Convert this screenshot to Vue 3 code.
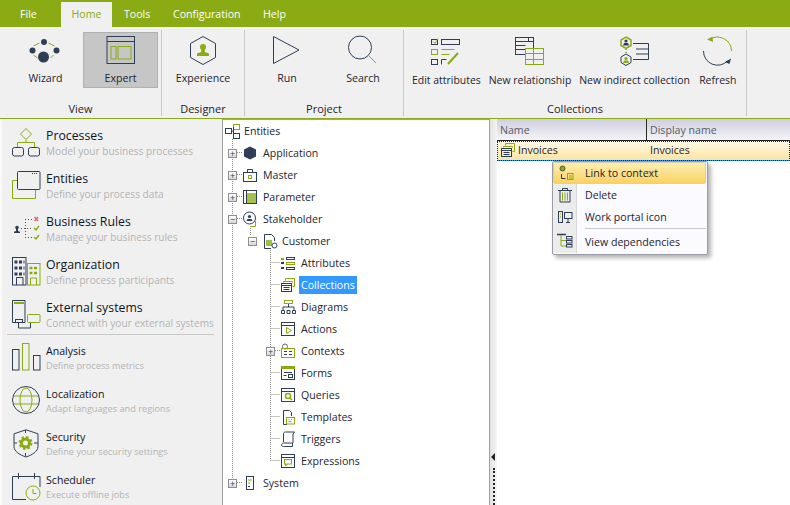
<template>
  <div class="app">
    <!-- Menu superior -->
    <nav class="menu">
      <span v-for="tab in tabs" :key="tab" class="tab" :class="{ active: tab === 'Home' }">{{ tab }}</span>
    </nav>

    <!-- Ribbon -->
    <header class="ribbon">
      <section v-for="group in ribbon" :key="group.name" class="group" :class="group.cls">
        <div class="group-btns">
          <div v-for="btn in group.buttons" :key="btn.label" class="rbtn" :class="[btn.cls, { selected: btn.selected }]">
            <svg class="ricon" viewBox="0 0 40 34" v-html="ribbonIcons[btn.icon]"></svg>
            <span>{{ btn.label }}</span>
          </div>
        </div>
        <div class="group-name">{{ group.name }}</div>
      </section>
    </header>

    <main class="body">
      <!-- Barra lateral -->
      <aside class="side">
        <div v-for="item in sideMain" :key="item.title" class="side-item">
          <svg class="sicon" viewBox="0 0 30 30" v-html="sideIcons[item.icon]"></svg>
          <div class="side-text">
            <div class="stitle">{{ item.title }}</div>
            <div class="ssub">{{ item.sub }}</div>
          </div>
        </div>
        <div class="side-div"></div>
        <div v-for="item in sideSmall" :key="item.title" class="side-item small">
          <svg class="sicon" viewBox="0 0 30 30" v-html="sideIcons[item.icon]"></svg>
          <div class="side-text">
            <div class="stitle">{{ item.title }}</div>
            <div class="ssub">{{ item.sub }}</div>
          </div>
        </div>
      </aside>

      <!-- Arbol -->
      <section class="tree">
        <svg class="tree-lines" width="266" height="385">
          <g fill="none" stroke="#8f8f8f" stroke-dasharray="1 1">
            <path d="M9.5 19V362.5M14 32.5H19M14 54.5H19M14 76.5H19M14 98.5H19M14 362.5H19" />
            <path d="M27.5 106V116" />
            <path d="M47.5 128V340.5" />
            <path d="M47.5 142.5H57M47.5 164.5H57M47.5 186.5H57M47.5 208.5H57M52 230.5H57M47.5 252.5H57M47.5 274.5H57M47.5 296.5H57M47.5 318.5H57M47.5 340.5H57" />
          </g>
        </svg>
        <div v-for="row in treeRows" :key="row.label" class="row" :class="'lvl' + row.level">
          <span class="exp" :class="{ none: !row.exp }">{{ row.exp }}</span>
          <svg class="ticon" viewBox="0 0 16 16" v-html="treeIcons[row.icon]"></svg>
          <span class="tlabel" :class="{ sel: row.sel }">{{ row.label }}</span>
        </div>
      </section>

      <!-- Separador -->
      <div class="splitter"><i></i><b></b></div>

      <!-- Rejilla -->
      <section class="grid">
        <div class="grid-head">
          <div class="col1">Name</div>
          <div class="col2">Display name</div>
        </div>
        <div class="grid-row">
          <div class="col1">
            <svg class="ticon" viewBox="0 0 16 16" v-html="treeIcons.collections"></svg>
            <span>Invoices</span>
          </div>
          <div class="col2">Invoices</div>
        </div>

        <!-- Menu contextual -->
        <div class="ctx">
          <div v-for="opt in ctxMenu" :key="opt.label" class="ctx-item" :class="{ hot: opt.hot }">
            <span class="ctx-ic">
              <svg viewBox="0 0 16 16" v-html="ctxIcons[opt.icon]"></svg>
            </span>
            <span class="ctx-label" :class="{ top: opt.sep }">{{ opt.label }}</span>
          </div>
        </div>
      </section>
    </main>
  </div>
</template>

<script setup>
const tabs = ['File', 'Home', 'Tools', 'Configuration', 'Help']

const ribbon = [
  {
    name: 'View', cls: 'g-view',
    buttons: [
      { label: 'Wizard', icon: 'wizard', cls: 'b-wizard' },
      { label: 'Expert', icon: 'expert', cls: 'b-expert', selected: true }
    ]
  },
  { name: 'Designer', cls: 'g-designer', buttons: [{ label: 'Experience', icon: 'experience', cls: 'b-exp' }] },
  {
    name: 'Project', cls: 'g-project',
    buttons: [
      { label: 'Run', icon: 'run', cls: 'b-run' },
      { label: 'Search', icon: 'search', cls: 'b-search' }
    ]
  },
  {
    name: 'Collections', cls: 'g-coll',
    buttons: [
      { label: 'Edit attributes', icon: 'edit', cls: 'low' },
      { label: 'New relationship', icon: 'relation', cls: 'low' },
      { label: 'New indirect collection', icon: 'indirect', cls: 'low' },
      { label: 'Refresh', icon: 'refresh', cls: 'low' }
    ]
  }
]

const sideMain = [
  { title: 'Processes', sub: 'Model your business processes', icon: 'processes' },
  { title: 'Entities', sub: 'Define your process data', icon: 'entities' },
  { title: 'Business Rules', sub: 'Manage your business rules', icon: 'rules' },
  { title: 'Organization', sub: 'Define process participants', icon: 'org' },
  { title: 'External systems', sub: 'Connect with your external systems', icon: 'external' }
]

const sideSmall = [
  { title: 'Analysis', sub: 'Define process metrics', icon: 'analysis' },
  { title: 'Localization', sub: 'Adapt languages and regions', icon: 'local' },
  { title: 'Security', sub: 'Define your security settings', icon: 'security' },
  { title: 'Scheduler', sub: 'Execute offline jobs', icon: 'scheduler' }
]

const treeRows = [
  { label: 'Entities', level: 0, icon: 'entities' },
  { label: 'Application', level: 1, exp: '+', icon: 'application' },
  { label: 'Master', level: 1, exp: '+', icon: 'master' },
  { label: 'Parameter', level: 1, exp: '+', icon: 'parameter' },
  { label: 'Stakeholder', level: 1, exp: '−', icon: 'stakeholder' },
  { label: 'Customer', level: 2, exp: '−', icon: 'customer' },
  { label: 'Attributes', level: 3, icon: 'attributes' },
  { label: 'Collections', level: 3, icon: 'collections', sel: true },
  { label: 'Diagrams', level: 3, icon: 'diagrams' },
  { label: 'Actions', level: 3, icon: 'actions' },
  { label: 'Contexts', level: 3, exp: '+', icon: 'contexts' },
  { label: 'Forms', level: 3, icon: 'forms' },
  { label: 'Queries', level: 3, icon: 'queries' },
  { label: 'Templates', level: 3, icon: 'templates' },
  { label: 'Triggers', level: 3, icon: 'triggers' },
  { label: 'Expressions', level: 3, icon: 'expressions' },
  { label: 'System', level: 1, exp: '+', icon: 'system' }
]

const ctxMenu = [
  { label: 'Link to context', icon: 'link', hot: true },
  { label: 'Delete', icon: 'delete' },
  { label: 'Work portal icon', icon: 'portal' },
  { label: 'View dependencies', icon: 'deps', sep: true }
]

// Colores de los iconos: N azul oscuro, G verde
const N = '#2e3f55'
const G = '#8aab14'
const s = (c, w = 1) => `fill="none" stroke="${c}" stroke-width="${w}"`

const ribbonIcons = {
  wizard: `<circle cx="17.5" cy="23" r="5.5" fill="${N}"/><circle cx="18" cy="8" r="3" fill="${N}"/><circle cx="6.5" cy="16.5" r="3" fill="${N}"/><circle cx="30.5" cy="16.5" r="3" fill="${N}"/><path ${s(G)} d="M7.5 12l6-3M22.5 9l6 3M7.5 21l4 3M27.5 21l-3 3"/>`,
  expert: `<rect x="6" y="2.5" width="27.5" height="27" ${s(N)}/><path ${s(N)} d="M6 7.5h27.5"/><rect x="10" y="12.5" width="5" height="12.5" ${s(G)}/><rect x="17" y="12.5" width="13" height="12.5" ${s(G)}/>`,
  experience: `<path ${s(N)} d="M20 2.5l12.5 7v14l-12.5 7-12.5-7v-14z"/><circle cx="20" cy="13" r="3" fill="${G}"/><path fill="${G}" d="M18.2 15h3.6v3l4.2 1.5V22H14v-2.5l4.2-1.5z"/>`,
  run: `<path ${s(N)} stroke-linejoin="round" d="M6.5 2.5l25.500 13.500-25.500 13.500z"/>`,
  search: `<circle cx="17" cy="13.5" r="11.5" ${s(N)}/><path ${s(G)} d="M25.5 21.5l7.5 7.5"/>`,
  edit: `<rect x="5.5" y="6.5" width="6" height="5" ${s(N)}/><path ${s(G)} d="M7 8.5l2 2 3-5"/><rect x="15.5" y="6.5" width="18" height="5" ${s(N)}/><rect x="5.5" y="16.5" width="6" height="5" ${s(G)}/><path ${s(G)} d="M15.5 16.5h13M15.5 21.5h8"/><rect x="5.5" y="26.5" width="6" height="5" ${s(N)}/><path ${s(N)} d="M15.5 31.5v-5h5"/><path ${s(G, 2)} d="M22 31l10-11"/>`,
  relation: `<rect x="5.5" y="4.5" width="18" height="17" ${s(N)}/><path ${s(N)} d="M5.5 8.5h18M5.5 12.5h10M5.5 16.5h10M18.5 4.5v4"/><rect x="15.5" y="15.5" width="18" height="16" fill="#f0f0f0" stroke="${G}"/><path ${s(G)} d="M15.5 20.5h18M15.5 26.5h18M23.5 15.5v16"/>`,
  indirect: `<path ${s(G, 1.5)} d="M11 4l5 3v5.5l-5 3-5-3V7z"/><path ${s(N)} d="M11 21l5 3v5.5l-5 3-5-3V24z"/><circle cx="11" cy="8" r="1.6" fill="${N}"/><path fill="${N}" d="M8 12.5h6l-1-2.500H9z"/><circle cx="11" cy="25.5" r="1.6" fill="${G}"/><path fill="${G}" d="M8 30h6l-1-2.500H9z"/><path ${s(N)} stroke-dasharray="1 2" d="M11 16v5"/><path ${s(N)} d="M18 10.5h15.500v16H18M21 16h12M21 21h12"/>`,
  refresh: `<path ${s(G)} d="M11 7a14 14 0 0 1 22.500 11"/><path fill="${G}" d="M9 6.500l5.500-3 .5 5.500z"/><path ${s(N)} d="M5.500 18a14 14 0 0 0 24 10"/><path fill="${N}" d="M33 25.500l-1.500 5.500-4.500-2z"/>`
}

// Iconos laterales dibujados 1:1 sobre la caja de 30x30
const sideIcons = {
  processes: `<path ${s(G)} d="M15 1.5l5.5 5.5-5.5 5.5-5.5-5.5zM15 12.5v3M6.5 20v-4.5h17V20"/><rect x="1.5" y="20.5" width="11" height="8.5" rx="2" ${s(N)}/><rect x="17.5" y="20.5" width="11" height="8.5" rx="2" ${s(N)}/>`,
  entities: `<path ${s(G)} d="M6 10.5H1.5v18h23V20"/><rect x="6.5" y="1.5" width="22.5" height="18" rx="1" ${s(N)}/><path stroke="${N}" stroke-dasharray="1 1" d="M21 3.5h6"/>`,
  rules: `<circle cx="6" cy="14.5" r="1.8" fill="${N}"/><path fill="${N}" d="M5 16h2v2l2 .8V20H3v-1.200l2-.8z"/><path fill="none" stroke="#555" stroke-dasharray="1 2" d="M14 6.5h8M10 15.5h12M14 24.5h8M14.5 6v18"/><path stroke="#e06070" stroke-width="1.4" d="M23.5 4l3.5 4m0-4l-3.5 4"/><path ${s(G, 1.4)} d="M23 15l2 2 3-4M23 24l2 2 3-4"/>`,
  org: `<rect x="1.5" y="1.5" width="13.5" height="27.5" ${s(N)}/><path fill="none" stroke="${N}" stroke-width="3" stroke-dasharray="3 1.5" d="M3.5 6h10M3.5 12h10M3.5 18h10"/><path ${s(N)} d="M5.5 29v-7.500h6.500V29"/><rect x="16.5" y="7.5" width="12.5" height="21.5" ${s(G)}/><path fill="none" stroke="${G}" stroke-width="2.5" stroke-dasharray="3 1.5" d="M18.5 12h8M18.5 17h8"/><path ${s(G)} d="M19.5 29v-7h6v7"/>`,
  external: `<path ${s(N)} d="M1.5 23.5V1.5H14v22z"/><path ${s(G, 2)} d="M3 4h10"/><rect x="4.5" y="20.5" width="7" height="3" fill="#f0f0f0" stroke="${N}"/><path ${s(N)} d="M7.5 23.5v5.500H19.500v-5"/><rect x="16.5" y="15.5" width="12.5" height="8" rx="1" fill="#f0f0f0" stroke="${G}"/>`,
  analysis: `<rect x="1.5" y="6.5" width="6.5" height="20.5" ${s(N)}/><rect x="11.5" y="0.5" width="6.5" height="26.5" ${s(G)}/><rect x="22.5" y="12.5" width="6.5" height="14.5" ${s(N)}/>`,
  local: `<circle cx="15" cy="14" r="13.5" ${s(N)}/><ellipse cx="15" cy="14" rx="6" ry="12" ${s(G)}/><path ${s(G)} d="M3 10h24M3 18h24"/>`,
  security: `<path ${s(N)} d="M15 .8l12 4v12.700c0 5-6 8.500-12 10.500-6-2-12-5.500-12-10.500V4.800z"/><path stroke="${N}" d="M14.5 1v3M14.5 24v3M3 14h3M23 14h4"/><circle cx="14.5" cy="14" r="4" fill="none" stroke="${G}" stroke-width="3"/><circle cx="14.5" cy="14" r="6" fill="none" stroke="${G}" stroke-width="2" stroke-dasharray="2.4 2.3"/>`,
  scheduler: `<path ${s(N)} d="M29 15V4.500H1.500v23h13.500M7.500 1v6M23.500 1v6"/><circle cx="22" cy="21" r="7" fill="#f0f0f0" stroke="${G}"/><path ${s(G)} d="M22 17v4.500h3.500"/>`
}

const treeIcons = {
  entities: `<rect x="1.5" y="5.5" width="6" height="5" ${s(N)}/><rect x="9.5" y="1.5" width="6" height="5" ${s(G)}/><rect x="9.5" y="10.5" width="6" height="5" ${s(N)}/><path ${s(N)} d="M7.5 8h2V4M9.5 8v5"/>`,
  application: `<path fill="${N}" d="M8 1.5l6 3v7l-6 3-6-3v-7z"/>`,
  master: `<rect x="1.5" y="5.5" width="13" height="9" ${s(N)}/><path ${s(N)} d="M5.5 5.5v-3h5v3"/><rect x="6.5" y="8.5" width="3" height="3" ${s(G)} fill="#fff"/>`,
  parameter: `<rect x="1.5" y="1.5" width="13" height="13" ${s(N)}/><rect x="5" y="4" width="9" height="10" fill="${G}" opacity=".75"/><path ${s(N)} d="M4.5 2v12"/>`,
  stakeholder: `<path ${s(G)} d="M13.5 10v5.500h-5"/><circle cx="7.5" cy="7" r="6" ${s(N)}/><circle cx="7.5" cy="5.5" r="1.6" fill="${N}"/><path fill="${N}" d="M4.5 10h6l-1-2h-4z"/>`,
  customer: `<path ${s(N)} d="M9 15.5H2.500v-14h7l3 3V8"/><rect x="4" y="7" width="6" height="6" fill="${G}" opacity=".8"/><circle cx="12.5" cy="12.5" r="2.5" ${s(N)}/>`,
  attributes: `<path stroke="${G}" stroke-width="2" d="M1 4h3"/><path stroke="${N}" stroke-width="2" d="M1 8h3M1 13h3"/><rect x="6.5" y="2.5" width="8" height="2" ${s(N)}/><rect x="6.5" y="7.5" width="8" height="2" ${s(G)}/><rect x="6.5" y="12.5" width="8" height="2" ${s(N)}/>`,
  collections: `<path ${s(G)} d="M5.5 3.500v-2h9v8h-2"/><path ${s(G)} d="M3.5 5.500v-1h9v1"/><rect x="1.5" y="6.5" width="10" height="8" ${s(N)} fill="#fff"/><path ${s(N)} d="M1.5 8.500h10M3.500 10.500h6M3.500 12.500h6"/>`,
  diagrams: `<rect x="4.5" y="1.5" width="8" height="3" ${s(G)}/><path ${s(N)} d="M8.5 5v3M3 11V8h11v3"/><path ${s(N)} d="M1.5 11.500h3v3h-3zM7 11.500h3v3H7zM12.500 11.500h3v3h-3z"/>`,
  actions: `<rect x="1.5" y="1.5" width="13" height="13" ${s(N)}/><path ${s(N)} d="M1.5 4.500h13"/><path ${s(G)} d="M6.5 6.500l5 3-5 3z"/>`,
  contexts: `<circle cx="5" cy="3.5" r="2.5" fill="none" stroke="#666"/><rect x="1.5" y="5.5" width="13" height="9" ${s(G)}/><path ${s(N)} d="M4 8.500h3M9 8.500h3M4 11.500h3M9 11.500h3"/>`,
  forms: `<rect x="1.5" y="1.5" width="13" height="13" ${s(N)}/><rect x="1" y="1" width="14" height="3" fill="${G}"/><path ${s(N)} d="M4 7.500h8"/><rect x="8.5" y="9.5" width="4" height="3" ${s(N)}/><path ${s(N)} d="M3.500 10.500h3"/>`,
  queries: `<rect x="1.5" y="1.5" width="13" height="13" ${s(N)}/><path ${s(N)} d="M1.5 4.500h13"/><circle cx="8" cy="9" r="2.5" ${s(G, 1.5)}/><path ${s(G, 1.5)} d="M10 11l2 2"/>`,
  templates: `<path ${s(N)} d="M7 15.500H3.500v-14h6l2 2V7"/><rect x="6.5" y="8.5" width="8" height="6.5" ${s(G)} fill="#fff"/><path ${s(G)} d="M8.500 10.500h1M11 10.500h1M8.500 12.500h3"/>`,
  triggers: `<path ${s(N)} d="M3.500 11V2.500c0-1 1-1.500 2-1.500h9l-1.500 2v9M1.500 14.500c1 1 2 1 3 1h8v-3.500h-9c-1 0-2 1-2 2.500z"/>`,
  expressions: `<rect x="1.5" y="1.5" width="13" height="13" ${s(N)}/><path ${s(N)} d="M1.5 4.500h13"/><rect x="4.5" y="6.5" width="7" height="4.5" ${s(G)}/><path ${s(G)} d="M5.500 11v2l2-2"/>`,
  system: `<rect x="4.5" y="1.5" width="7" height="13" ${s(N)}/><path ${s(G)} d="M6 5h4M6 8h2"/><path ${s(N)} d="M6 11.500h2"/>`
}

const ctxIcons = {
  link: `<circle cx="4.5" cy="3.5" r="2.5" fill="${G}" stroke="#555"/><path ${s(N)} d="M3.500 9v4.500h4"/><rect x="9.5" y="8.5" width="5.5" height="6" ${s(G)}/><path ${s(G)} d="M11 11h3M11 13h3"/>`,
  delete: `<path ${s(N)} d="M1 3.500h14M5.500 3V1.500h5V3M3 3.500v11.500h10V3.500"/><path stroke="${G}" d="M5.500 5.500v8M8 5.500v8M10.500 5.500v8" />`,
  portal: `<rect x="1.5" y="2.5" width="4" height="11" ${s(N)}/><path ${s(G)} d="M3 5h1M3 8h1"/><rect x="7.5" y="3.5" width="7.5" height="6" ${s(N)}/><path ${s(N)} d="M11 10v3M9 13.500h4"/>`,
  deps: `<path ${s(N, 1.5)} d="M0 1.500h9"/><path ${s(G)} d="M4 2v11h5M4 7.500h5"/><rect x="9.5" y="3.5" width="5.5" height="2.5" ${s(N)}/><rect x="9.5" y="7.5" width="5.5" height="2.5" ${s(N)}/><rect x="9.5" y="11.5" width="5.5" height="2.5" ${s(N)}/>`
}
</script>

<style>
html, body {
  margin: 0;
  background: #f0f0f0;
}
</style>

<style scoped>
.app {
  width: 790px;
  height: 505px;
  overflow: hidden;
  display: flex;
  flex-direction: column;
  font-family: "Open Sans", "Liberation Sans", sans-serif;
  font-size: 10.6px;
  color: #1e2430;
  background: #f0f0f0;
}

.menu {
  height: 27px;
  flex: none;
  display: flex;
  align-items: flex-end;
  background: #8aab14;
  color: #fff;
  padding-left: 20px;
}
.tab {
  height: 25px;
  line-height: 24px;
  margin-right: 24px;
  white-space: nowrap;
}
.tab:nth-child(1) { width: 17px; }
.tab:nth-child(3) { width: 25px; }
.tab:nth-child(4) { width: 66px; }
.tab.active {
  background: #f0f0f0;
  color: #8aab14;
  box-sizing: border-box;
  width: 51px;
  text-align: center;
  margin-right: 12px;
}

.ribbon {
  height: 91px;
  flex: none;
  display: flex;
  border-bottom: 1px solid #8aab14;
}
.group {
  box-sizing: border-box;
  height: 86px;
  margin-top: 3px;
  border-right: 1px solid #c8c8c8;
  display: flex;
  flex-direction: column;
}
.g-view { width: 162px; }
.g-designer { width: 83px; }
.g-project { width: 159px; }
.g-coll { width: 343px; }
.group-btns {
  height: 70px;
  display: flex;
  padding-top: 2px;
  box-sizing: border-box;
}
.group-name {
  text-align: center;
  line-height: 14px;
  height: 14px;
  margin-top: 2px;
  font-size: 11px;
}
.rbtn {
  box-sizing: border-box;
  display: flex;
  flex-direction: column;
  align-items: center;
  height: 56px;
  white-space: nowrap;
}
.ricon {
  width: 40px;
  height: 34px;
  flex: none;
  margin-top: 2px;
}
.rbtn span { margin-top: 3px; line-height: 15px; }
.b-wizard { width: 75px; margin-left: 8px; }
.b-expert { width: 75px; }
.rbtn.selected {
  background: #c6c6c6;
  border: 1px solid #b0b0b0;
}
.rbtn.selected .ricon { margin-top: 1px; }
.b-exp { width: 82px; }
.b-run { width: 84px; }
.b-search { width: 68px; }
.g-coll .group-btns { padding: 0 0 0 8px; gap: 8px; }
.rbtn.low { height: 62px; }
.rbtn.low .ricon { margin-top: 3px; }
.rbtn.low span { margin-top: 6px; font-size: 10.45px; }

.body {
  flex: 1;
  min-height: 0;
  display: flex;
}

.side {
  width: 222px;
  flex: none;
  box-sizing: border-box;
  padding-left: 9px;
  border-left: 2px solid #fafafa;
}
.side-item {
  height: 43px;
  display: flex;
  align-items: flex-start;
  gap: 5px;
  padding-top: 9px;
  box-sizing: border-box;
}
.sicon {
  width: 30px;
  height: 30px;
  flex: none;
  margin-top: -1px;
}
.side-text { white-space: nowrap; }
.stitle { font-size: 12.3px; line-height: 16px; color: #10141c; }
.ssub { color: #b4b4b4; font-size: 10.1px; line-height: 15px; }
.small { padding-top: 8px; }
.small .sicon { margin-top: 0; }
.small .stitle { font-size: 10.6px; line-height: 16px; }
.small .ssub { font-size: 9.2px; line-height: 14px; }
.side-div {
  height: 1px;
  background: #c8c8c8;
  margin: 0 8px 0 -4px;
}

.tree {
  position: relative;
  width: 268px;
  flex: none;
  box-sizing: border-box;
  height: 100%;
  background: #fff;
  border: 1px solid #a0a0a0;
  border-width: 1px 1px 0 1px;
}
.tree-lines {
  position: absolute;
  left: 0;
  top: 0;
}
.row {
  position: relative;
  height: 22px;
  display: flex;
  align-items: center;
  white-space: nowrap;
}
.exp {
  box-sizing: border-box;
  width: 9px;
  height: 9px;
  border: 1px solid #8f8f8f;
  background: linear-gradient(#fff, #d8d8d8);
  color: #1d3f78;
  font-size: 9px;
  line-height: 7px;
  text-align: center;
  flex: none;
}
.exp.none {
  visibility: hidden;
}
.ticon {
  width: 16px;
  height: 16px;
  flex: none;
}
.tree .ticon {
  margin-left: 5px;
}
.tlabel {
  margin-left: 3px;
  padding: 0 2px;
  line-height: 18px;
}
.tlabel.sel {
  background: #3399ff;
  color: #fff;
}
.lvl0 .exp { display: none; }
.lvl0 { padding-left: 1px; }
.tree .lvl0 .ticon { margin-left: 0; }
.lvl0 .tlabel { margin-left: 2px; }
.lvl1 { padding-left: 5px; }
.lvl2 { padding-left: 25px; }
.lvl2 .tlabel { margin-left: 2px; }
.lvl3 { padding-left: 43px; }

.splitter {
  width: 7px;
  flex: none;
  position: relative;
  background: linear-gradient(90deg, #e2e2e2, #f6f6f6);
}
.splitter i {
  position: absolute;
  left: 1px;
  top: 334px;
  border: 4px solid transparent;
  border-right-color: #222;
  border-left-width: 0;
}
.splitter b {
  position: absolute;
  left: 3px;
  top: 349px;
  bottom: 0;
  border-left: 2px dotted #222;
}

.grid {
  position: relative;
  flex: 1;
  min-width: 0;
  background: #fff;
}
.grid-head {
  height: 22px;
  box-sizing: border-box;
  display: flex;
  align-items: center;
  color: #555b66;
  background: linear-gradient(#cfcfdf, #f4f4f8);
  border-bottom: 1px solid #222;
}
.col1 {
  width: 150px;
  box-sizing: border-box;
  padding-left: 3px;
  height: 100%;
  display: flex;
  align-items: center;
  gap: 2px;
}
.grid-head .col1 { border-right: 1px solid #2a2a2a; }
.col2 {
  padding-left: 3px;
}
.grid-row {
  height: 20px;
  box-sizing: border-box;
  padding-bottom: 2px;
  display: flex;
  align-items: center;
  outline: 1px dotted #223;
  outline-offset: -1px;
  background: linear-gradient(#fffbe8, #fde3a0);
  border-bottom: 1px solid #3399ff;
}

.ctx {
  position: absolute;
  left: 55px;
  top: 42px;
  width: 156px;
  box-sizing: border-box;
  padding: 0 1px 1px 0;
  background: #fbfaff;
  border: 1px solid #9a9ca8;
  border-radius: 2px;
  box-shadow: 3px 3px 4px rgba(0, 0, 0, 0.3);
}
.ctx-item {
  display: flex;
  align-items: center;
  height: 22px;
}
.ctx-item:last-child { height: 25px; }
.ctx-ic {
  box-sizing: border-box;
  width: 24px;
  height: 100%;
  flex: none;
  display: flex;
  align-items: center;
  justify-content: center;
  background: #ececec;
  border-right: 1px solid #d8d8d8;
}
.ctx-ic svg {
  width: 16px;
  height: 16px;
}
.ctx-label {
  flex: 1;
  height: 100%;
  line-height: 22px;
  margin-left: 8px;
}
.ctx-label.top {
  box-sizing: border-box;
  border-top: 1px solid #c8c8c8;
  line-height: 26px;
}
.ctx-item.hot {
  box-sizing: border-box;
  border: 1px solid #e6cf95;
  border-radius: 2px;
  background: linear-gradient(#fdeeb5, #fbd262);
}
.ctx-item.hot .ctx-ic {
  background: transparent;
  border-right: 0;
}
.ctx-item.hot .ctx-label { margin-left: 7px; line-height: 20px; }
</style>
